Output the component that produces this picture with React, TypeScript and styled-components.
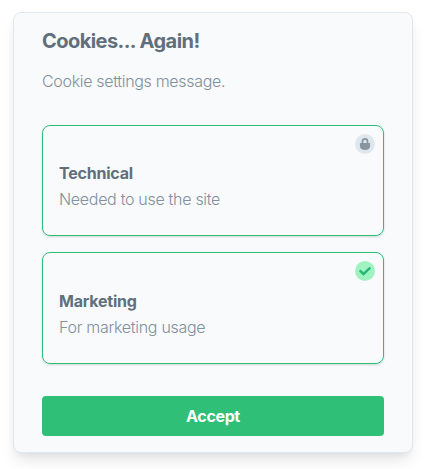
import React from 'react';
import styled, { createGlobalStyle } from 'styled-components';

const GlobalStyle = createGlobalStyle`
  * { box-sizing: border-box; }
  body {
    margin: 0;
    background: #fff;
    font-family: Inter, "Liberation Sans", sans-serif;
    font-size: 16px;
    line-height: 24px;
    color: #606f7b;
    font-feature-settings: "calt" 0;
  }
`;

const Page = styled.main`
  height: 469px;
  padding: 12px 12px 0 13px;
  overflow: hidden;
`;

const Panel = styled.section`
  width: 400px;
  height: 441px;
  padding: 12px 28px 0;
  display: flex;
  flex-direction: column;
  background: #f8fafc;
  border: 1px solid #dfe7ef;
  border-radius: 8px;
  box-shadow: 0 10px 15px -3px rgba(0, 0, 0, 0.1), 0 4px 6px -2px rgba(0, 0, 0, 0.05);
`;

const Title = styled.h1`
  margin: 0;
  height: 32px;
  font-size: 20px;
  line-height: 32px;
  font-weight: 700;
  letter-spacing: -0.55px;
`;

const Message = styled.p`
  margin: 12px 0 32px;
  font-weight: 300;
  color: #80909c;
  letter-spacing: -0.32px;
`;

const Options = styled.div`
  display: grid;
  grid-template-rows: 111px 112px;
  row-gap: 16px;
`;

const Option = styled.article`
  position: relative;
  display: flex;
  flex-direction: column;
  justify-content: center;
  padding: 10px 16px 0;
  border: 1px solid #2dbe78;
  border-radius: 8px;
  box-shadow: 0 1px 3px rgba(0, 0, 0, 0.1), 0 1px 2px rgba(0, 0, 0, 0.06);

  &:last-child {
    padding-top: 11px;
  }
`;

const OptionName = styled.h2`
  margin: 0;
  font-size: 16px;
  line-height: 26px;
  font-weight: 700;
  letter-spacing: -0.22px;
`;

const OptionText = styled.p`
  margin: 0;
  line-height: 26px;
  font-weight: 300;
  color: #80909c;
  letter-spacing: -0.3px;
`;

const Badge = styled.span<{ $on?: boolean }>`
  position: absolute;
  top: 8px;
  right: 8px;
  width: 20px;
  height: 20px;
  display: flex;
  align-items: center;
  justify-content: center;
  border-radius: 50%;
  background: ${(p) => (p.$on ? '#a0f3c0' : '#dfe7ee')};
  color: ${(p) => (p.$on ? '#26b574' : '#8795a1')};
`;

const Accept = styled.button`
  height: 40px;
  margin: 32px 0 0;
  padding: 0;
  border: 0;
  border-radius: 4px;
  background: #2fbf77;
  color: #fff;
  font: 700 16px/40px Inter, "Liberation Sans", sans-serif;
  letter-spacing: -0.35px;
`;

const LockIcon = () => (
  <svg width="12" height="12" viewBox="0 0 12 12" fill="none">
    <path d="M3.500 6V3.400a2.500 2.500 0 0 1 5 0V6" stroke="currentColor" strokeWidth="1.700" />
    <path d="M1.400 5h9.200q.5 0 .5.500V8C11.100 10.400 9 12 6 12S.9 10.400.9 8V5.500q0-.5.500-.5Z" fill="currentColor" />
  </svg>
);

const CheckIcon = () => (
  <svg width="12" height="10" viewBox="0 0 12 10" fill="none">
    <path d="M1.500 5.200 4.500 8.100 10.500 2.300" stroke="currentColor" strokeWidth="2.500" strokeLinecap="round" />
  </svg>
);

export default function App() {
  return (
    <Page>
      <GlobalStyle />
      <Panel>
        <Title>Cookies... Again!</Title>
        <Message>Cookie settings message.</Message>
        <Options>
          <Option>
            <Badge><LockIcon /></Badge>
            <OptionName>Technical</OptionName>
            <OptionText>Needed to use the site</OptionText>
          </Option>
          <Option>
            <Badge $on><CheckIcon /></Badge>
            <OptionName>Marketing</OptionName>
            <OptionText>For marketing usage</OptionText>
          </Option>
        </Options>
        <Accept type="button">Accept</Accept>
      </Panel>
    </Page>
  );
}
